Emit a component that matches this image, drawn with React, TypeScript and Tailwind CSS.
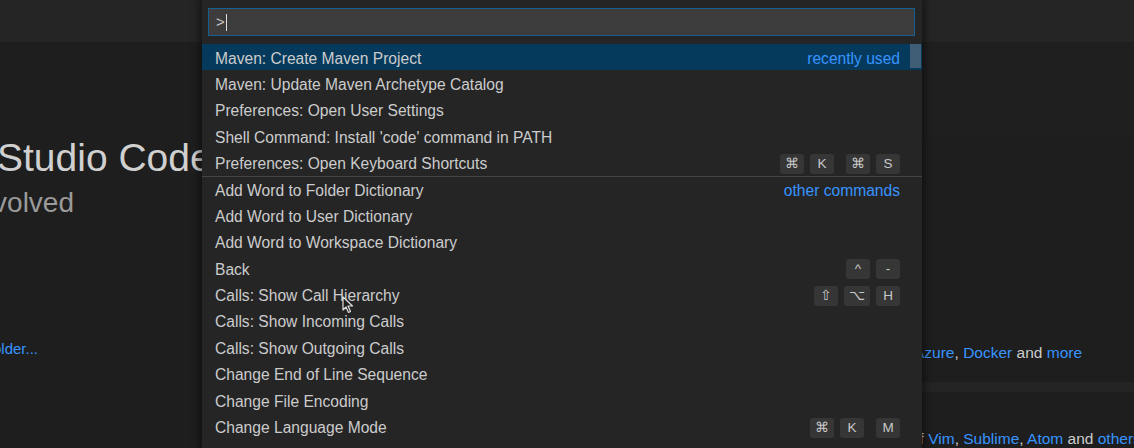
import React from "react";

type Row = {
  label: string;
  hint?: string;
  keys?: string[][];
  selected?: boolean;
  separator?: boolean;
};

const rows: Row[] = [
  { label: "Maven: Create Maven Project", hint: "recently used", selected: true },
  { label: "Maven: Update Maven Archetype Catalog" },
  { label: "Preferences: Open User Settings" },
  { label: "Shell Command: Install 'code' command in PATH" },
  { label: "Preferences: Open Keyboard Shortcuts", keys: [["⌘", "K"], ["⌘", "S"]] },
  { label: "Add Word to Folder Dictionary", hint: "other commands", separator: true },
  { label: "Add Word to User Dictionary" },
  { label: "Add Word to Workspace Dictionary" },
  { label: "Back", keys: [["^", "-"]] },
  { label: "Calls: Show Call Hierarchy", keys: [["⇧", "⌥", "H"]] },
  { label: "Calls: Show Incoming Calls" },
  { label: "Calls: Show Outgoing Calls" },
  { label: "Change End of Line Sequence" },
  { label: "Change File Encoding" },
  { label: "Change Language Mode", keys: [["⌘", "K"], ["M"]] },
];

function Keys({ chords }: { chords: string[][] }) {
  return (
    <div className="flex items-center gap-[12px]">
      {chords.map((chord, i) => (
        <div key={i} className="flex items-center gap-[6px]">
          {chord.map((k, j) => (
            <span
              key={j}
              className="flex h-[20px] min-w-[24px] items-center justify-center rounded-[3px] bg-[#363636] px-[5px] text-[13.5px] text-[#c8c8c8]"
            >
              {k}
            </span>
          ))}
        </div>
      ))}
    </div>
  );
}

function Cursor() {
  return (
    <svg className="absolute left-[140px] top-[296px]" width="12" height="18" viewBox="0 0 12 18">
      <path d="M1 1 L1 14 L4 11 L6.5 16.5 L8.5 15.5 L6 10 L10.5 10 Z" fill="#1e1e1e" stroke="#e0e0e0" strokeWidth="1.2" strokeLinejoin="round" />
    </svg>
  );
}

export default function App() {
  return (
    <div
      className="relative h-[448px] w-[1134px] overflow-hidden bg-[#1e1e1e] text-[#cccccc]"
      style={{ fontFamily: '"Liberation Sans", Arial, sans-serif' }}
    >
      {/* title area */}
      <div className="h-[42px] bg-[#252526]" />

      {/* welcome page behind the palette */}
      <div className="flex h-[406px]">
        <div className="w-[202px] shrink-0">
          <div className="mt-[94px] -ml-[3px] whitespace-nowrap text-[39px] leading-[44px] text-[#d0d0d0]">
            Studio Code
          </div>
          <div className="mt-[4px] flex w-[74px] justify-end">
            <span className="whitespace-nowrap text-[28px] leading-[38px] text-[#9a9a9a]">Editing evolved</span>
          </div>
          <div className="mt-[116px] flex w-[38px] justify-end">
            <span className="whitespace-nowrap text-[15px] text-[#3794ff]">Open folder...</span>
          </div>
        </div>
        <div className="w-[720px] shrink-0" />
        <div className="flex flex-1 flex-col">
          <div className="h-[108px] bg-[#1f1f1f]" />
          <div className="-ml-[8px] mt-[207px] whitespace-nowrap text-[15.5px] leading-[18px]">
            <span className="text-[#3794ff]">Azure</span>, <span className="text-[#3794ff]">Docker</span> and{" "}
            <span className="text-[#3794ff]">more</span>
          </div>
          <div className="mt-[20px] h-[12px] bg-[#242424]" />
          <div className="-ml-[11px] mt-[38px] whitespace-nowrap text-[15.5px] leading-[18px]">
            of <span className="text-[#3794ff]">Vim</span>, <span className="text-[#3794ff]">Sublime</span>,{" "}
            <span className="text-[#3794ff]">Atom</span> and <span className="text-[#3794ff]">others</span>
          </div>
        </div>
      </div>

      {/* command palette */}
      <div className="absolute left-[202px] top-0 h-[448px] w-[720px] bg-[#252526] shadow-[0_0_8px_3px_rgba(0,0,0,0.45)]">
        <div className="ml-[6px] mr-[7px] mt-[8px] flex h-[28px] items-center border border-[#175f8f] bg-[#3c3c3c] px-[7px] text-[15px] text-[#cccccc]">
          <span>&gt;</span>
          <span className="ml-[1px] h-[17px] w-[1px] bg-[#dcdcdc]" />
        </div>
        <div className="relative mt-[8px]">
          {rows.map((r, i) => (
            <div
              key={i}
              className={
                "flex h-[26.4px] items-center justify-between pl-[13px] pr-[22px] pt-[2px] text-[15.6px] " +
                (r.selected ? "bg-[#063a5d] " : "") +
                (r.separator ? "border-t border-[#454545]" : "")
              }
            >
              <span className="whitespace-nowrap text-[#cccccc]">{r.label}</span>
              {r.hint && <span className="text-[#3794ff]">{r.hint}</span>}
              {r.keys && <Keys chords={r.keys} />}
            </div>
          ))}
          <div className="absolute right-[1px] top-0 h-[24px] w-[11px] bg-[#3f5d74]" />
        </div>
        <Cursor />
      </div>
    </div>
  );
}
